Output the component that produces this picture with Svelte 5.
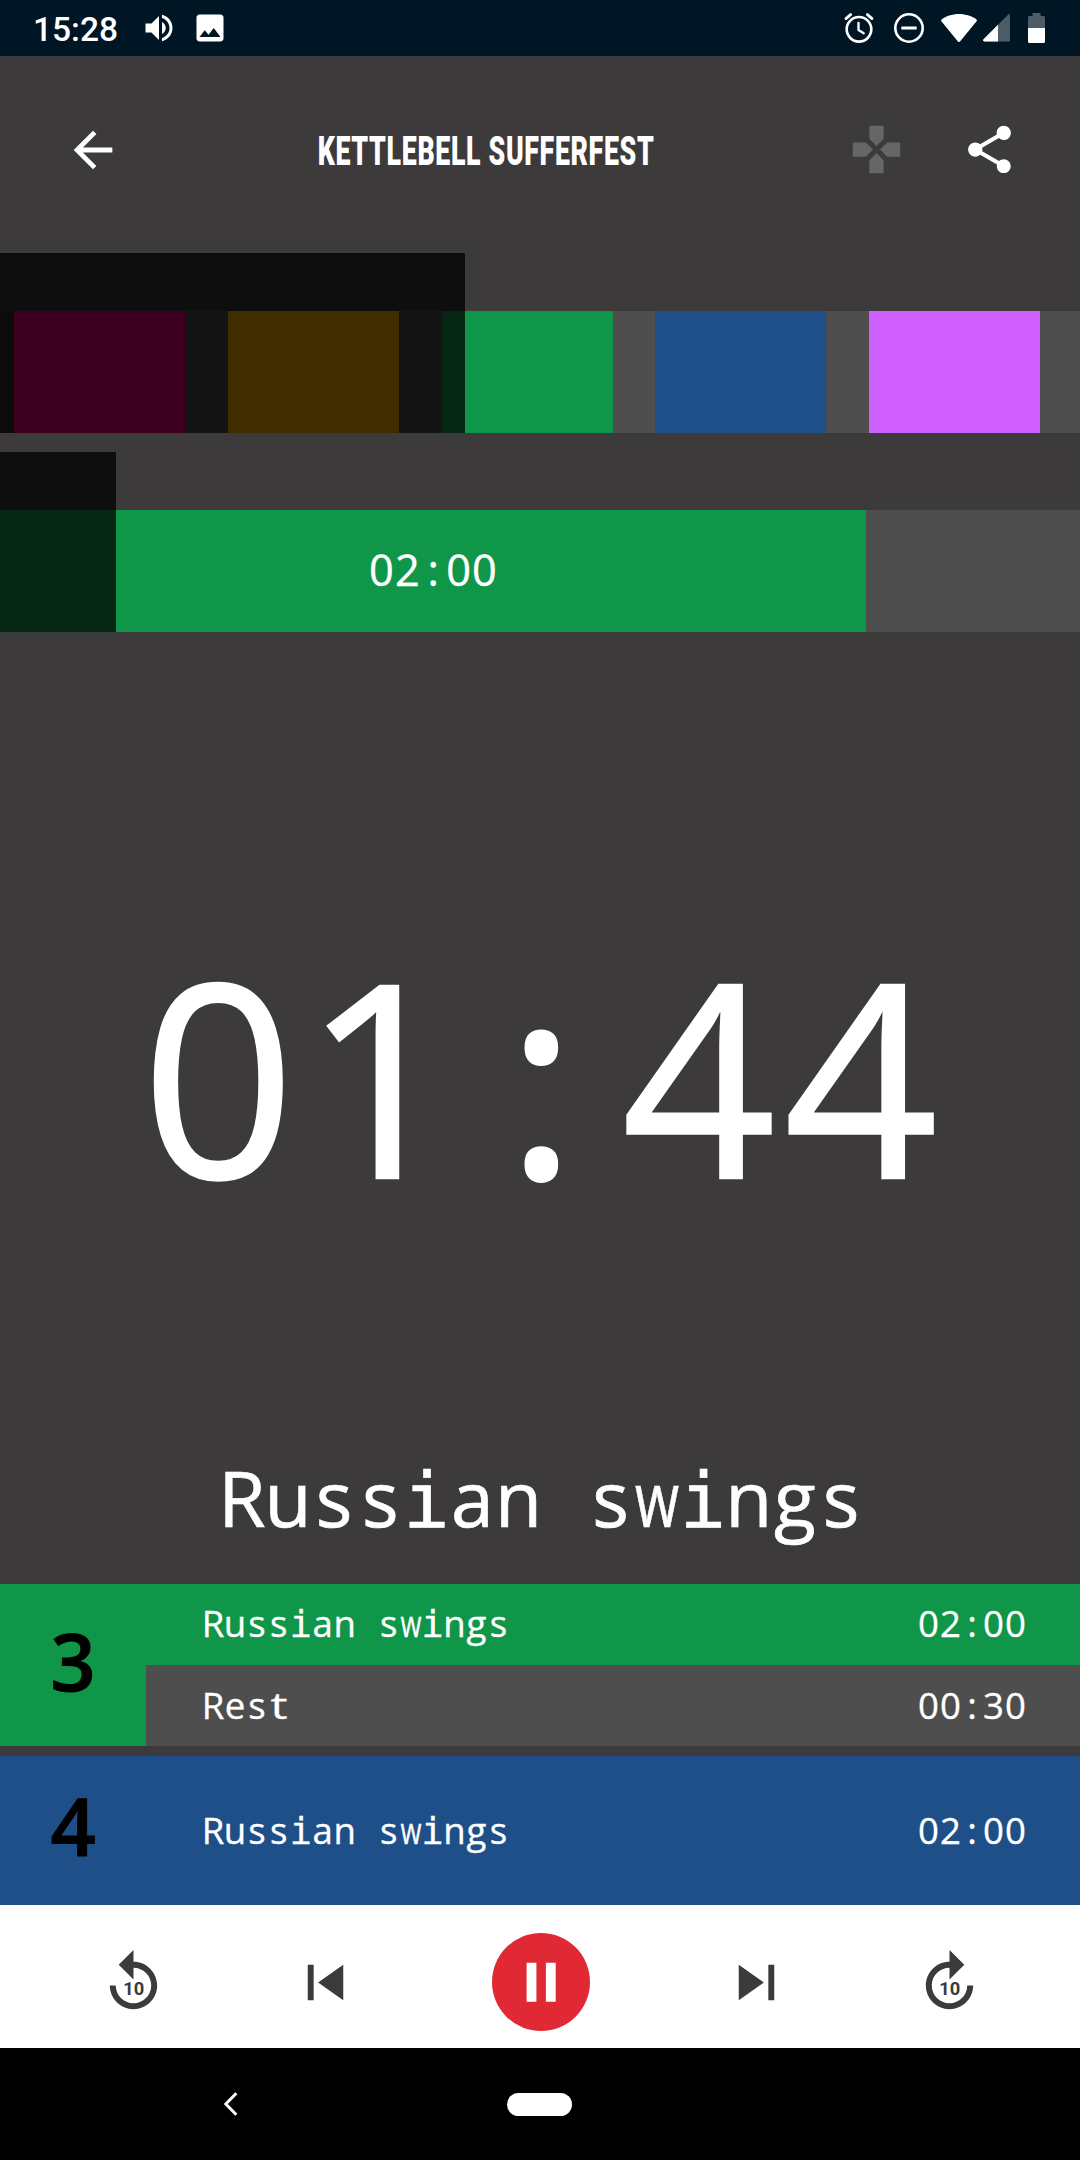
<script>
  const segments = [
    { color: '#f40080', length: 120 },
    { color: '#4e4e4e', length: 30 },
    { color: '#fcb400', length: 120 },
    { color: '#4e4e4e', length: 30 },
    { color: '#109648', length: 120 },
    { color: '#4e4e4e', length: 30 },
    { color: '#1e4f89', length: 120 },
    { color: '#4e4e4e', length: 30 },
    { color: '#d05fff', length: 120 },
    { color: '#4e4e4e', length: 30 }
  ];

  const rounds = [
    {
      number: 3,
      tone: 'green',
      steps: [
        { name: 'Russian swings', time: '02:00', tone: 'green' },
        { name: 'Rest', time: '00:30', tone: 'rest' }
      ]
    },
    {
      number: 4,
      tone: 'blue',
      steps: [{ name: 'Russian swings', time: '02:00', tone: 'blue' }]
    }
  ];

  // Letters whose proportional form does not suit a fixed-width cell.
  const fitted = { i: 'serifed', w: 'narrowed', t: 'widened' };
</script>

{#snippet clock(time)}{time.split(':')[0]}<span class="colon">:</span>{time.split(':')[1]}{/snippet}

{#snippet mono(text)}{#each [...text] as letter}<span class="cell {fitted[letter] ?? ''}">{letter}</span>{/each}{/snippet}

<div class="screen">
  <div class="status">
    <span class="time">15:28</span>
    <svg class="volume" width="36" height="36" viewBox="0 0 24 24"><path d="M3 9v6h4l5 5V4L7 9H3zm13.500 3c0-1.770-1.020-3.290-2.500-4.030v8.050c1.480-.73 2.500-2.250 2.500-4.020zM14 3.230v2.060c2.890.86 5 3.540 5 6.710s-2.110 5.850-5 6.710v2.060c4.010-.91 7-4.490 7-8.770s-2.990-7.860-7-8.770z" /></svg>
    <svg class="image" width="36" height="36" viewBox="0 0 24 24"><path d="M21 19V5c0-1.100-.9-2-2-2H5c-1.100 0-2 .9-2 2v14c0 1.100.9 2 2 2h14c1.100 0 2-.9 2-2zM8.500 13.500l2.500 3.010L14.500 12l4.500 6H5l3.500-4.500z" /></svg>
    <span class="fill"></span>
    <svg class="alarm" width="30" height="32" viewBox="0 0 30 32">
      <g fill="none" stroke="#fff" stroke-linecap="round" stroke-linejoin="round">
        <circle cx="15" cy="17.300" r="12.300" stroke-width="2.600" />
        <path d="M14.500 11v7l5.200 3.200" stroke-width="2.300" />
        <path d="M2 6.600l4.600-4M28 6.600l-4.600-4" stroke-width="2.800" />
      </g>
    </svg>
    <svg class="dnd" width="30" height="30" viewBox="0 0 30 30">
      <circle cx="15" cy="15" r="13.700" fill="none" stroke="#fff" stroke-width="2.600" />
      <rect x="7.300" y="13.400" width="15.400" height="3.200" rx=".6" />
    </svg>
    <svg class="wifi" width="36" height="28" viewBox="0 0 36 28"><path d="M18 0C11 0 4.700 2.300.6 5.400c-.7.6-.7 1.200-.2 1.900l16.500 20.200c.6.700 1.500.7 2.100 0L35.600 7.300c.5-.7.5-1.300-.2-1.900C31.300 2.300 25 0 18 0z" /></svg>
    <svg class="signal" width="27" height="28" viewBox="0 0 27 28">
      <path d="M27 1.500c0-1.300-1.200-1.700-2-.8L.5 25.200c-.9 1-.5 2.300.9 2.300H27z" fill="#4d5c66" />
      <path d="M15 10.700L.5 25.200c-.9 1-.5 2.300.9 2.300H15z" />
    </svg>
    <svg class="battery" width="17" height="30" viewBox="0 0 17 30">
      <path d="M4.500 0h8v3H15.500c.9 0 1.500.6 1.500 1.500V15H0V4.500C0 3.600.6 3 1.500 3h3z" fill="#4d5c66" />
      <path d="M0 15h17v13.500c0 .9-.6 1.500-1.500 1.500h-14c-.9 0-1.500-.6-1.500-1.500z" />
    </svg>
  </div>

  <header class="header">
    <svg class="back" width="58" height="58" viewBox="0 0 24 24"><path d="M20 11H7.830l5.590-5.590L12 4l-8 8 8 8 1.410-1.410L7.830 13H20v-2z" /></svg>
    <div class="title"><span>KETTLEBELL SUFFERFEST</span></div>
    <svg class="pad" width="57" height="57" viewBox="0 0 24 24"><path fill="#666" d="M15 7.500V2H9v5.500l3 3 3-3zM7.500 9H2v6h5.500l3-3-3-3zM9 16.500V22h6v-5.500l-3-3-3 3zM16.500 9l-3 3 3 3H22V9h-5.500z" /></svg>
    <svg class="share" width="57" height="57" viewBox="0 0 24 24"><path d="M18 16.080c-.76 0-1.440.3-1.960.77L8.910 12.700c.05-.23.09-.46.09-.7s-.04-.47-.09-.7l7.050-4.110c.54.5 1.250.81 2.040.81 1.660 0 3-1.340 3-3s-1.340-3-3-3-3 1.340-3 3c0 .24.04.47.09.7L8.040 9.810C7.500 9.310 6.790 9 6 9c-1.660 0-3 1.340-3 3s1.340 3 3 3c.79 0 1.500-.31 2.040-.81l7.120 4.160c-.05.21-.08.43-.08.65 0 1.610 1.310 2.920 2.920 2.920s2.920-1.310 2.920-2.920-1.310-2.920-2.920-2.920z" /></svg>
  </header>

  <section class="track overview">
    <div class="bar">
      {#each segments as segment}
        <div style="flex: {segment.length} 0 0; background: {segment.color}"></div>
      {/each}
    </div>
    <div class="elapsed"></div>
  </section>

  <section class="track current">
    <div class="bar">
      <div class="work digits">{@render clock('02:00')}</div>
    </div>
    <div class="elapsed"></div>
  </section>

  <main class="now">
    <div class="countdown digits">{@render clock('01:44')}</div>
    <div class="exercise">{@render mono('Russian swings')}</div>
  </main>

  <section class="rounds">
    {#each rounds as round}
      <div class="round {round.tone}">
        <div class="number">{round.number}</div>
        <div class="steps">
          {#each round.steps as step}
            <div class="step {step.tone}">
              <span class="name">{@render mono(step.name)}</span>
              <span class="digits">{@render clock(step.time)}</span>
            </div>
          {/each}
        </div>
      </div>
    {/each}
  </section>

  <div class="controls">
    <svg width="71" height="71" viewBox="0 0 24 24">
      <path d="M12 5V1L7 6l5 5V7c3.300 0 6 2.700 6 6s-2.700 6-6 6-6-2.700-6-6H4c0 4.400 3.600 8 8 8s8-3.600 8-8-3.600-8-8-8z" />
      <text x="12.100" y="16.200">10</text>
    </svg>
    <svg width="71" height="71" viewBox="0 0 24 24"><path d="M6 6h2v12H6zm3.500 6l8.500 6V6z" /></svg>
    <div class="pause">
      <svg width="98" height="98" viewBox="0 0 98 98">
        <circle cx="49" cy="49" r="49" fill="#e02935" />
        <path fill="#fff" d="M34.600 29.700h9.800v39h-9.800zM53.900 29.700h9.800v39h-9.800z" />
      </svg>
    </div>
    <svg width="71" height="71" viewBox="0 0 24 24"><path d="M6 18l8.500-6L6 6v12zM16 6v12h2V6h-2z" /></svg>
    <svg width="71" height="71" viewBox="0 0 24 24">
      <path d="M4 13c0 4.400 3.600 8 8 8s8-3.600 8-8h-2c0 3.300-2.700 6-6 6s-6-2.700-6-6 2.700-6 6-6v4l5-5-5-5v4c-4.400 0-8 3.600-8 8z" />
      <text x="12.100" y="16.200">10</text>
    </svg>
  </div>

  <nav class="system">
    <svg width="14" height="24" viewBox="0 0 14 24"><path d="M12.300 1.200L1.800 12l10.500 10.800" fill="none" stroke="#fff" stroke-width="3" /></svg>
    <div class="pill"></div>
  </nav>
</div>

<style>
  :global(body) {
    background: #3d3a3b;
  }

  .screen {
    width: 1080px;
    height: 2160px;
    display: flex;
    flex-direction: column;
    overflow: hidden;
    background: #3d3a3b;
    color: #fff;
    font-family: 'Open Sans', 'Noto Sans', sans-serif;
  }

  svg {
    display: block;
    flex: none;
    fill: #fff;
  }

  .status {
    height: 56px;
    display: flex;
    align-items: center;
    padding: 0 35px 0 33px;
    background: #001624;
  }
  .time {
    width: 108px;
    font: 500 33.500px/52px Roboto, sans-serif;
    padding-top: 4px;
  }
  .image { margin-left: 15px; }
  .fill { flex: 1; }
  .dnd { margin-left: 20px; }
  .wifi { margin: 0 6px 0 17px; }
  .battery { margin-left: 18px; }

  .header {
    height: 187px;
    margin-bottom: 10px;
    display: flex;
    align-items: center;
    padding: 0 62px 0 64px;
  }
  .title {
    width: 336px;
    margin-left: 196px;
    display: flex;
    justify-content: center;
    padding-top: 3px;
    font: 900 40.500px/60px Roboto, sans-serif;
    letter-spacing: 1px;
    white-space: nowrap;
  }
  .title span { transform: scaleX(0.66); }
  .pad { margin-left: auto; }
  .share { margin-left: 56px; }

  .track {
    position: relative;
    height: 180px;
    flex: none;
    display: flex;
    flex-direction: column;
    justify-content: flex-end;
  }
  .current { margin-top: 19px; }
  .bar {
    height: 121.600px;
    display: flex;
    background: #4e4e4e;
  }
  .overview .bar {
    width: 1068.500px;
    padding-left: 14.300px;
    background: #333;
    margin-right: -3px;
  }
  .elapsed {
    position: absolute;
    inset: 0 auto 0 0;
    background: rgba(0, 0, 0, 0.75);
  }
  .overview .elapsed { width: 465px; }
  .current .elapsed { width: 116.400px; }
  .work {
    width: 866px;
    line-height: 120px;
    font-size: 43.300px;
    text-align: center;
    background: #109648;
  }

  .digits {
    padding-left: 0.028em;
    box-sizing: border-box;
    letter-spacing: 0.028em;
    white-space: nowrap;
    -webkit-text-stroke: 0.009em #fff;
  }
  .colon {
    display: inline-block;
    width: 0.58em;
    letter-spacing: 0;
    text-align: center;
    text-indent: -0.018em;
  }

  .cell {
    display: inline-flex;
    justify-content: center;
    width: 0.6em;
    line-height: 1;
    white-space: pre;
    -webkit-text-stroke: 0.009em #fff;
  }
  .serifed { font-family: 'DejaVu Sans Mono', monospace; }
  .narrowed { transform: scaleX(0.74); }
  .widened { transform: scaleX(1.3); }

  .now {
    flex: 1;
    text-align: center;
  }
  .countdown {
    margin-top: 292px;
    font-size: 269px;
    line-height: 300px;
    letter-spacing: 0.031em;
  }
  .exercise {
    margin-top: 224px;
    padding-left: 3px;
    font-size: 76.800px;
    line-height: 100px;
  }

  .rounds {
    height: 321px;
    display: grid;
    grid-template-rows: 162px 149px;
    row-gap: 10px;
  }
  .round { display: flex; }
  .number {
    width: 146px;
    display: grid;
    place-items: center;
    padding-bottom: 9px;
    box-sizing: border-box;
    color: #000;
    font-weight: 600;
    font-size: 79px;
    line-height: 90px;
    -webkit-text-stroke: 1px #000;
  }
  .steps {
    flex: 1;
    display: grid;
    grid-auto-rows: 1fr;
  }
  .step {
    display: flex;
    align-items: center;
    justify-content: space-between;
    padding: 0 53px 2px 56px;
    font-size: 36.600px;
    line-height: 50px;
  }
  .step.green { padding-bottom: 3px; }
  .green { background: #109648; }
  .blue { background: #1e4f89; }
  .rest { background: #4e4e4e; }

  .controls {
    height: 143px;
    display: flex;
    align-items: center;
    justify-content: space-between;
    padding: 11px 95.500px 0 98px;
    box-sizing: border-box;
    background: #fff;
  }
  .controls svg { fill: #3d3a3b; }
  .controls text {
    font: 700 6.200px Roboto, sans-serif;
    text-anchor: middle;
  }
  .pause {
    width: 117px;
    display: flex;
    justify-content: center;
  }

  .system {
    height: 112px;
    display: flex;
    align-items: center;
    gap: 269px;
    padding-left: 224px;
    background: #000;
  }
  .pill {
    width: 65px;
    height: 23px;
    border-radius: 12px;
    background: #fff;
  }
</style>
